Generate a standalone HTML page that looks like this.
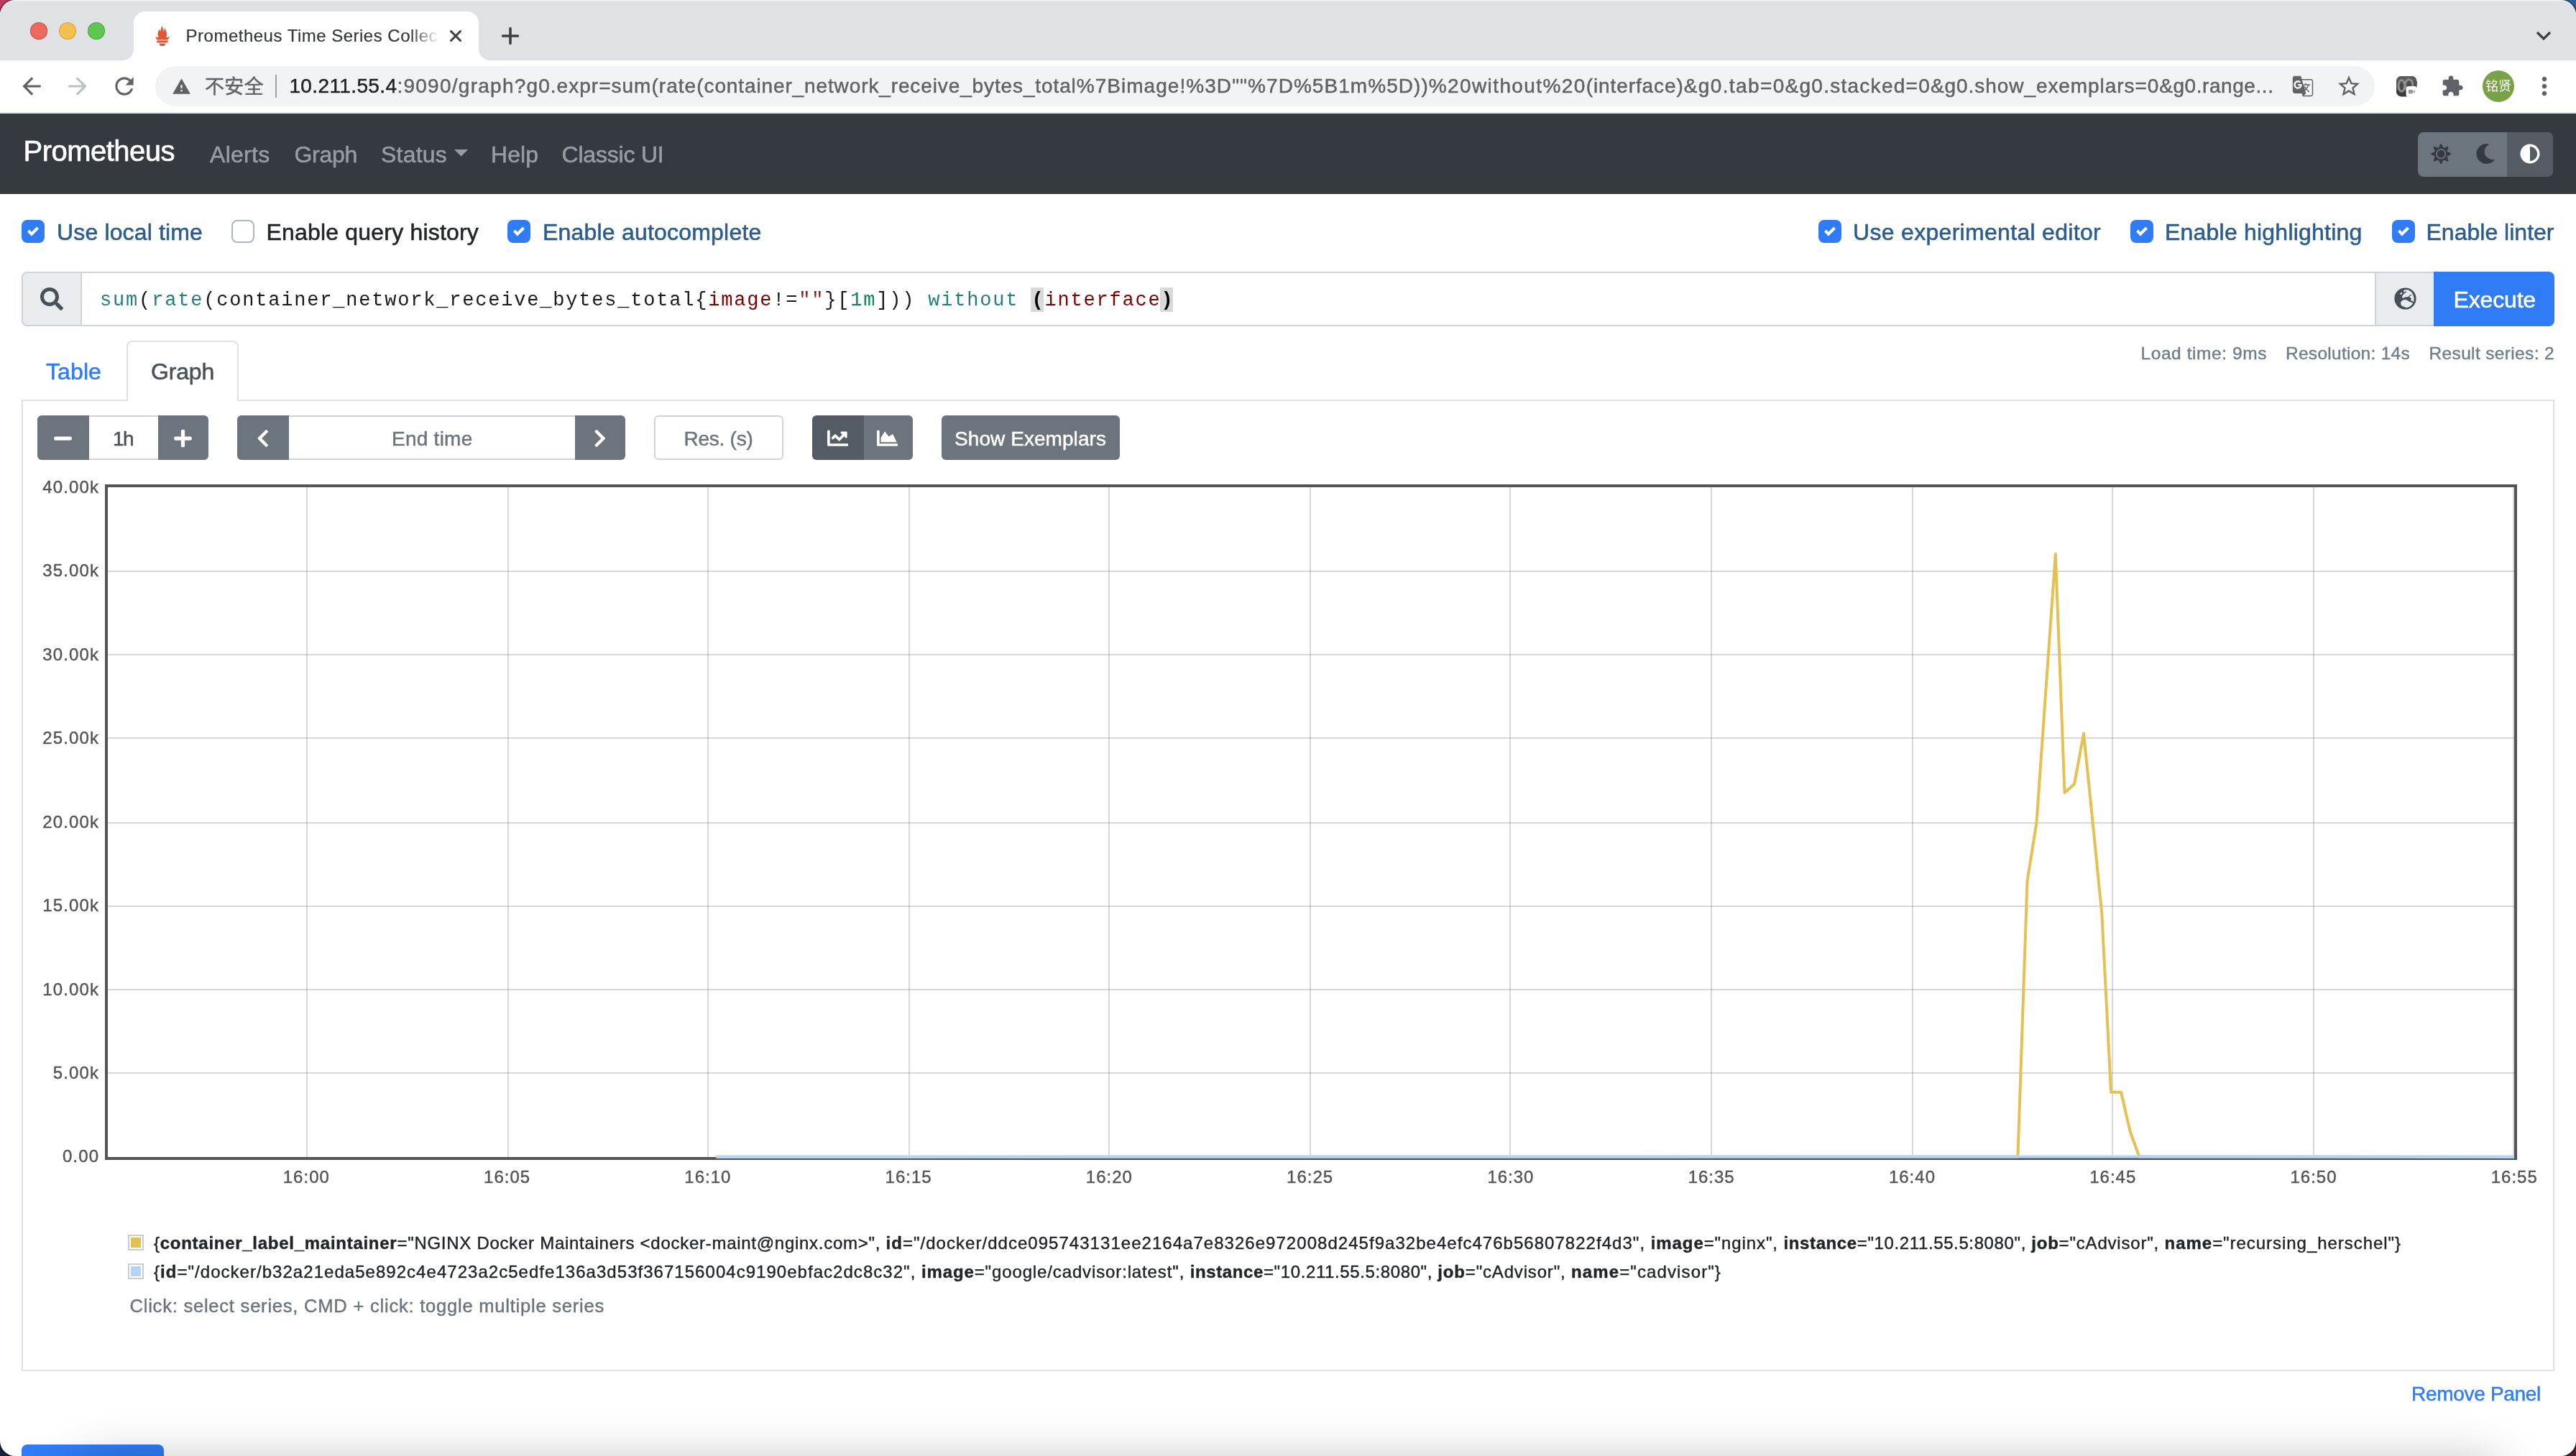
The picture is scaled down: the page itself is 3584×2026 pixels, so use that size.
<!DOCTYPE html>
<html lang="en"><head><meta charset="utf-8"><title>Prometheus Time Series Collection and Processing Server</title>
<style>
html,body{margin:0;padding:0;}
body{width:3584px;height:2026px;overflow:hidden;background:#fff;position:relative;font-family:'Liberation Sans', 'Noto Sans CJK SC', sans-serif;}
#root{position:absolute;left:0;top:0;width:3584px;height:2026px;overflow:hidden;will-change:transform;}
#root section{position:absolute;left:0;top:0;width:0;height:0;}
#root div,#root svg,#root span.t{position:absolute;}
span.t{white-space:pre;}
span.t b{font-weight:700;}
</style></head>
<body><div id="root">
<section class="window-frame">
<div style="left:0px;top:0px;width:40px;height:40px;background:#b93c62;"></div>
<div style="left:3544px;top:0px;width:40px;height:40px;background:#2a6199;"></div>
<div style="left:0px;top:1986px;width:40px;height:40px;background:#16223d;"></div>
<div style="left:3544px;top:1986px;width:40px;height:40px;background:#571a30;"></div>
<div style="left:0px;top:0px;width:3584px;height:2026px;background:#ffffff;border-radius:21px;box-shadow:0 0 0 1.500px rgba(0,0,0,0.450);"></div>
</section>
<section class="browser-tabstrip">
<div style="left:0px;top:0px;width:3584px;height:84px;background:#dfe1e5;border-radius:21px 21px 0 0;"></div>
<div style="left:20px;top:0px;width:3544px;height:1px;background:#f3f3f5;"></div>
<div style="left:14px;top:1px;width:3556px;height:1px;background:#e7e8eb;"></div>
<div style="left:42px;top:31px;width:24px;height:24px;background:#ed6a5e;border-radius:50%;box-shadow:inset 0 0 0 1px #d04e42;"></div>
<div style="left:82px;top:31px;width:24px;height:24px;background:#f5bf4f;border-radius:50%;box-shadow:inset 0 0 0 1px #d6a13d;"></div>
<div style="left:122px;top:31px;width:24px;height:24px;background:#61c554;border-radius:50%;box-shadow:inset 0 0 0 1px #4ea73f;"></div>
<svg style="left:170px;top:15px;" width="512" height="69" viewBox="0 0 512 69"><path fill="#ffffff" d="M0 69 C9 69 16 62 16 53 L16 17 C16 8 23 1 32 1 L480 1 C489 1 496 8 496 17 L496 53 C496 62 503 69 512 69 Z"/></svg>
<svg style="left:216px;top:35.6px;" width="20" height="28.4" viewBox="0 0 20 28.400"><path fill="#da5a38" d="M9.500 0C10.600 2.400 11 5 11.500 8.500C12 6.300 12.800 4.300 13.600 2.700C14 6 16.300 8 16.100 12C16 13.800 15.600 15 14.900 16.100Q17.500 16.300 20 15.100Q19 17.800 17.500 19.200L2.300 19.200Q1 17.800 0 15.100Q2.500 16.300 5 16.100C3.300 14 3 11 4 8.500C4.600 6.500 5 5 5.200 3.900C5.600 5.500 6.400 6.800 7.200 7.400C7.800 5 8 2.500 9.500 0Z"/><rect fill="#da5a38" x="2.300" y="20.400" width="15.200" height="2.900"/><path fill="#da5a38" d="M5.400 24.500H14.400C14 26.800 12.200 28.400 9.900 28.400S5.800 26.800 5.400 24.500Z"/></svg>
<span class="t" id="t1" style="letter-spacing:0.492px;top:37.98px;font-size:24px;line-height:24px;color:#33373b;font-family:'Liberation Sans', 'Noto Sans CJK SC', sans-serif;left:258.6px;-webkit-text-stroke:0.2px;">Prometheus Time Series Collec</span>
<div style="left:570px;top:24px;width:46px;height:50px;background:linear-gradient(90deg,rgba(255,255,255,0),#fff 92%);"></div>
<svg style="left:624px;top:40px;" width="20" height="20" viewBox="0 0 20 20"><path d="M3.500 3.500L16.500 16.500M16.500 3.500L3.500 16.500" stroke="#3c4043" stroke-width="3" stroke-linecap="round" fill="none"/></svg>
<svg style="left:696px;top:36px;" width="28" height="28" viewBox="0 0 28 28"><path d="M14 3.5V24.5M3.5 14H24.5" stroke="#3c4043" stroke-width="3.6" stroke-linecap="round" fill="none"/></svg>
<svg style="left:3527px;top:41px;" width="24" height="18" viewBox="0 0 24 18"><path d="M3 4L12 13L21 4" stroke="#3c4043" stroke-width="3.2" fill="none"/></svg>
</section>
<section class="browser-toolbar">
<div style="left:0px;top:84px;width:3584px;height:73px;background:#ffffff;"></div>
<div style="left:0px;top:156px;width:3584px;height:2px;background:#e3e4e6;"></div>
<svg style="left:24.5px;top:101.0px;" width="38" height="38" viewBox="0 0 24 24"><path fill="#5f6368" d="M20 11H7.83l5.59-5.590L12 4l-8 8 8 8 1.410-1.410L7.830 13H20v-2z"/></svg>
<svg style="left:88.5px;top:101.0px;" width="38" height="38" viewBox="0 0 24 24"><path fill="#bdc1c6" d="M12 4l-1.410 1.410L16.170 11H4v2h12.170l-5.580 5.590L12 20l8-8z"/></svg>
<svg style="left:153.5px;top:101.0px;" width="38" height="38" viewBox="0 0 24 24"><path fill="#5f6368" d="M17.650 6.350C16.200 4.900 14.210 4 12 4c-4.420 0-7.990 3.580-7.990 8s3.570 8 7.990 8c3.730 0 6.840-2.550 7.730-6h-2.080c-.820 2.330-3.040 4-5.650 4-3.310 0-6-2.690-6-6s2.690-6 6-6c1.660 0 3.140.690 4.220 1.780L13 11h7V4l-2.350 2.350z"/></svg>
<div style="left:216px;top:92px;width:3088px;height:56px;background:#f1f3f4;border-radius:28px;"></div>
<svg style="left:238.5px;top:107.0px;" width="27" height="27" viewBox="0 0 24 24"><path fill="#5f6368" d="M1 21h22L12 2 1 21zm12-3h-2v-2h2v2zm0-4h-2v-4h2v4z"/></svg>
<span class="t" id="t2" style="letter-spacing:0.333px;top:108.14px;font-size:27px;line-height:27px;color:#5f6368;font-family:'Liberation Sans', 'Noto Sans CJK SC', sans-serif;-webkit-text-stroke:0.46px;left:285px;">不安全</span>
<div style="left:382.5px;top:104px;width:2px;height:32px;background:#9aa0a6;"></div>
<span class="t" id="t3" style="letter-spacing:0.378px;top:105.80px;font-size:28px;line-height:28px;color:#202124;font-family:'Liberation Sans', 'Noto Sans CJK SC', sans-serif;-webkit-text-stroke:0.48px;left:402.4px;">10.211.55.4</span>
<span class="t" id="t4" style="letter-spacing:1.263px;top:105.80px;font-size:28px;line-height:28px;color:#5f6368;font-family:'Liberation Sans', 'Noto Sans CJK SC', sans-serif;-webkit-text-stroke:0.48px;left:552.4px;">:9090/graph?</span>
<span class="t" id="t5" style="letter-spacing:1.021px;top:105.80px;font-size:28px;line-height:28px;color:#5f6368;font-family:'Liberation Sans', 'Noto Sans CJK SC', sans-serif;-webkit-text-stroke:0.48px;left:732.6px;">g0.expr=sum(rate(</span>
<span class="t" id="t6" style="letter-spacing:0.880px;top:105.80px;font-size:28px;line-height:28px;color:#5f6368;font-family:'Liberation Sans', 'Noto Sans CJK SC', sans-serif;-webkit-text-stroke:0.48px;left:979.5px;">container_network_receive_bytes_total</span>
<span class="t" id="t7" style="letter-spacing:1.047px;top:105.80px;font-size:28px;line-height:28px;color:#5f6368;font-family:'Liberation Sans', 'Noto Sans CJK SC', sans-serif;-webkit-text-stroke:0.48px;left:1497.7px;">%7Bimage!%3D&quot;&quot;%7D%5B1m%5D))</span>
<span class="t" id="t8" style="letter-spacing:1.391px;top:105.80px;font-size:28px;line-height:28px;color:#5f6368;font-family:'Liberation Sans', 'Noto Sans CJK SC', sans-serif;-webkit-text-stroke:0.48px;left:1987.8px;">%20without%20</span>
<span class="t" id="t9" style="letter-spacing:0.905px;top:105.80px;font-size:28px;line-height:28px;color:#5f6368;font-family:'Liberation Sans', 'Noto Sans CJK SC', sans-serif;-webkit-text-stroke:0.48px;left:2206.7px;">(interface)</span>
<span class="t" id="t10" style="letter-spacing:1.383px;top:105.80px;font-size:28px;line-height:28px;color:#5f6368;font-family:'Liberation Sans', 'Noto Sans CJK SC', sans-serif;-webkit-text-stroke:0.48px;left:2342.7px;">&amp;g0.tab=0</span>
<span class="t" id="t11" style="letter-spacing:1.259px;top:105.80px;font-size:28px;line-height:28px;color:#5f6368;font-family:'Liberation Sans', 'Noto Sans CJK SC', sans-serif;-webkit-text-stroke:0.48px;left:2483.6px;">&amp;g0.stacked=0</span>
<span class="t" id="t12" style="letter-spacing:0.929px;top:105.80px;font-size:28px;line-height:28px;color:#5f6368;font-family:'Liberation Sans', 'Noto Sans CJK SC', sans-serif;-webkit-text-stroke:0.48px;left:2686px;">&amp;g0.show_exemplars=0</span>
<span class="t" id="t13" style="letter-spacing:0.561px;top:105.80px;font-size:28px;line-height:28px;color:#5f6368;font-family:'Liberation Sans', 'Noto Sans CJK SC', sans-serif;-webkit-text-stroke:0.48px;left:3004.2px;">&amp;g0.range...</span>
<svg style="left:3187.0px;top:103.0px;" width="34" height="34" viewBox="0 0 24 24"><path fill="#5f6368" d="M20 5h-9.120L10 2H4c-1.100 0-2 .900-2 2v13c0 1.100.900 2 2 2h7l1 3h8c1.100 0 2-.900 2-2V7c0-1.100-.900-2-2-2zM7.170 14.590c-2.250 0-4.090-1.830-4.090-4.090s1.830-4.090 4.090-4.090c1.040 0 1.990.370 2.740 1.070l.070.060-1.230 1.180-.060-.050c-.290-.270-.780-.590-1.520-.590-1.310 0-2.380 1.090-2.380 2.420s1.070 2.420 2.380 2.420c1.370 0 1.960-.870 2.120-1.460H7.080V9.910h3.950l.010.070c.040.210.050.400.050.610 0 2.350-1.610 4-3.920 4zm6.030-1.710c.330.600.740 1.180 1.190 1.700l-.540.530-.650-2.230zm.770-.760h-.990l-.310-1.040h3.990s-.340 1.310-1.560 2.740c-.520-.620-.890-1.230-1.130-1.700zM21 20c0 .550-.450 1-1 1h-7l2-2-.810-2.770.920-.920L17.790 18l.730-.730-2.710-2.680c.900-1.030 1.600-2.250 1.920-3.510H19v-1.040h-3.640V9h-1.040v1.040h-1.960L11.180 6H20c.550 0 1 .450 1 1v13z"/></svg>
<svg style="left:3250.0px;top:101.5px;" width="36" height="36" viewBox="0 0 24 24"><path fill="#5f6368" d="M22 9.240l-7.190-.620L12 2 9.190 8.630 2 9.240l5.460 4.730L5.820 21 12 17.270 18.180 21l-1.630-7.030L22 9.240zM12 15.400l-3.760 2.270 1-4.280-3.320-2.880 4.380-.380L12 6.100l1.710 4.040 4.380.380-3.320 2.880 1 4.280L12 15.400z"/></svg>
<svg style="left:3334px;top:106px;" width="30" height="30" viewBox="0 0 30 30"><rect x="0" y="0" width="28.4" height="28.4" rx="7" fill="#3a3a3c"/><rect x="0" y="0" width="28.4" height="17" rx="7" fill="#5a5a5c"/><rect x="0" y="8" width="28.4" height="12" fill="#4a4a4c"/><rect x="0" y="7" width="28.4" height="3" fill="#525254"/><rect x="0" y="18" width="28.4" height="3" fill="#424244"/><ellipse cx="7.300" cy="13.400" rx="4.300" ry="7.800" fill="none" stroke="#8e8e90" stroke-width="3"/><ellipse cx="17.600" cy="12" rx="5.200" ry="7.600" fill="none" stroke="#8e8e90" stroke-width="3"/><rect x="13.600" y="13.900" width="15.400" height="15.400" rx="3.600" fill="#ffffff"/><rect x="16.800" y="18.700" width="6.200" height="5.600" rx="1" fill="#9a9a9c"/><path d="M23 21.500l3-2.300v4.600z" fill="#9a9a9c"/></svg>
<svg style="left:3396.0px;top:103.7px;" width="32" height="32" viewBox="0 0 24 24"><path fill="#5f6368" d="M20.500 11H19V7c0-1.100-.900-2-2-2h-4V3.500C13 2.120 11.880 1 10.500 1S8 2.120 8 3.500V5H4c-1.100 0-1.990.900-1.990 2v3.800H3.500c1.490 0 2.700 1.210 2.700 2.700s-1.210 2.700-2.700 2.700H2V20c0 1.100.900 2 2 2h3.800v-1.500c0-1.490 1.210-2.700 2.700-2.700 1.490 0 2.700 1.210 2.700 2.700V22H17c1.100 0 2-.900 2-2v-4h1.500c1.380 0 2.500-1.120 2.500-2.500S21.880 11 20.500 11z"/></svg>
<div style="left:3453.5px;top:98px;width:44px;height:44px;background:#79a146;border-radius:50%;"></div>
<span class="t" id="t14" style="letter-spacing:0.000px;top:111.26px;font-size:18px;line-height:18px;color:#ffffff;font-family:'Liberation Sans', 'Noto Sans CJK SC', sans-serif;left:3458px;-webkit-text-stroke:0;">铭贤</span>
<svg style="left:3520.0px;top:100.0px;" width="40" height="40" viewBox="0 0 24 24"><path fill="#5f6368" d="M12 8c1.100 0 2-.900 2-2s-.900-2-2-2-2 .900-2 2 .900 2 2 2zm0 2c-1.100 0-2 .900-2 2s.900 2 2 2 2-.900 2-2-.900-2-2-2zm0 6c-1.100 0-2 .900-2 2s.900 2 2 2 2-.900 2-2-.900-2-2-2z"/></svg>
</section>
<section class="navbar">
<div style="left:0px;top:158px;width:3584px;height:112px;background:#343a40;"></div>
<span class="t" id="t15" style="letter-spacing:-0.517px;top:190.14px;font-size:40px;line-height:40px;color:#ffffff;font-family:'Liberation Sans', 'Noto Sans CJK SC', sans-serif;-webkit-text-stroke:0.68px;left:32.5px;">Prometheus</span>
<span class="t" id="t16" style="letter-spacing:0.284px;top:198.91px;font-size:32px;line-height:32px;color:#9a9da0;font-family:'Liberation Sans', 'Noto Sans CJK SC', sans-serif;-webkit-text-stroke:0.54px;left:292px;">Alerts</span>
<span class="t" id="t17" style="letter-spacing:-0.287px;top:198.91px;font-size:32px;line-height:32px;color:#9a9da0;font-family:'Liberation Sans', 'Noto Sans CJK SC', sans-serif;-webkit-text-stroke:0.54px;left:409.5px;">Graph</span>
<span class="t" id="t18" style="letter-spacing:0.214px;top:198.91px;font-size:32px;line-height:32px;color:#9a9da0;font-family:'Liberation Sans', 'Noto Sans CJK SC', sans-serif;-webkit-text-stroke:0.54px;left:530px;">Status</span>
<svg style="left:631.5px;top:208px;" width="20" height="10" viewBox="0 0 20 10"><path d="M0 0H19.200L9.600 9.600z" fill="#9a9da0"/></svg>
<span class="t" id="t19" style="letter-spacing:0.047px;top:198.91px;font-size:32px;line-height:32px;color:#9a9da0;font-family:'Liberation Sans', 'Noto Sans CJK SC', sans-serif;-webkit-text-stroke:0.54px;left:683px;">Help</span>
<span class="t" id="t20" style="letter-spacing:-0.202px;top:198.91px;font-size:32px;line-height:32px;color:#9a9da0;font-family:'Liberation Sans', 'Noto Sans CJK SC', sans-serif;-webkit-text-stroke:0.54px;left:781.5px;">Classic UI</span>
<div style="left:3364px;top:184px;width:188px;height:62px;background:#6c757d;border-radius:8px;"></div>
<div style="left:3488px;top:184px;width:64px;height:62px;background:#545b62;border-radius:0 8px 8px 0;"></div>
<svg style="left:3381.65px;top:199.85px;" width="28.3" height="28.3" viewBox="0 0 512 512"><path fill="#343a40" d="M256 160c-52.900 0-96 43.100-96 96s43.100 96 96 96 96-43.100 96-96-43.100-96-96-96zm246.400 80.500l-94.700-47.300 33.500-100.400c4.500-13.600-8.400-26.500-21.900-21.900l-100.400 33.500-47.400-94.800c-6.400-12.800-24.600-12.800-31 0l-47.300 94.700L92.700 70.800c-13.600-4.500-26.500 8.400-21.900 21.900l33.500 100.400-94.700 47.400c-12.800 6.400-12.800 24.600 0 31l94.700 47.300-33.500 100.500c-4.500 13.600 8.400 26.500 21.900 21.900l100.400-33.500 47.300 94.700c6.400 12.800 24.600 12.800 31 0l47.300-94.700 100.400 33.500c13.600 4.500 26.500-8.400 21.900-21.900l-33.500-100.400 94.700-47.300c13-6.500 13-24.700.200-31.100zm-155.900 106c-49.900 49.900-131.100 49.900-181 0-49.900-49.900-49.900-131.100 0-181 49.900-49.900 131.100-49.900 181 0 49.900 49.900 49.900 131.100 0 181z"/></svg>
<svg style="left:3444.0px;top:199.5px;" width="28" height="28" viewBox="0 0 512 512"><path fill="#343a40" d="M283.211 512c78.962 0 151.079-35.925 198.857-94.792 7.068-8.708-.639-21.430-11.562-19.350-124.203 23.654-238.262-71.576-238.262-196.954 0-72.222 38.662-138.635 101.498-174.394 9.686-5.512 7.250-20.197-3.756-22.230A258.156 258.156 0 0 0 283.211 0c-141.309 0-256 114.511-256 256 0 141.309 114.511 256 256 256z"/></svg>
<svg style="left:3505.5px;top:199.5px;" width="28" height="28" viewBox="0 0 512 512"><path fill="#ffffff" d="M8 256c0 136.966 111.033 248 248 248s248-111.034 248-248S392.966 8 256 8 8 119.033 8 256zm248 184V72c101.705 0 184 82.311 184 184 0 101.705-82.311 184-184 184z"/></svg>
</section>
<section class="options-row">
<div style="left:30px;top:306px;width:32px;height:32px;background:#2f7cf6;border-radius:8px;"></div>
<svg style="left:38px;top:314px;" width="16" height="16" viewBox="0 0 8 8"><path fill="#fff" d="M6.564.750l-3.590 3.612-1.538-1.550L0 4.260l2.974 2.990L8 2.193z"/></svg>
<span class="t" id="t21" style="letter-spacing:0.146px;top:306.91px;font-size:32px;line-height:32px;color:#2b5c8e;font-family:'Liberation Sans', 'Noto Sans CJK SC', sans-serif;-webkit-text-stroke:0.54px;left:79px;">Use local time</span>
<div style="left:322px;top:306px;width:32px;height:32px;background:#ffffff;border-radius:8px;box-sizing:border-box;border:2px solid #adb5bd;"></div>
<span class="t" id="t22" style="letter-spacing:0.189px;top:306.91px;font-size:32px;line-height:32px;color:#212529;font-family:'Liberation Sans', 'Noto Sans CJK SC', sans-serif;-webkit-text-stroke:0.54px;left:370.5px;">Enable query history</span>
<div style="left:706px;top:306px;width:32px;height:32px;background:#2f7cf6;border-radius:8px;"></div>
<svg style="left:714px;top:314px;" width="16" height="16" viewBox="0 0 8 8"><path fill="#fff" d="M6.564.750l-3.590 3.612-1.538-1.550L0 4.260l2.974 2.990L8 2.193z"/></svg>
<span class="t" id="t23" style="letter-spacing:0.202px;top:306.91px;font-size:32px;line-height:32px;color:#2b5c8e;font-family:'Liberation Sans', 'Noto Sans CJK SC', sans-serif;-webkit-text-stroke:0.54px;left:755px;">Enable autocomplete</span>
<div style="left:2530px;top:306px;width:32px;height:32px;background:#2f7cf6;border-radius:8px;"></div>
<svg style="left:2538px;top:314px;" width="16" height="16" viewBox="0 0 8 8"><path fill="#fff" d="M6.564.750l-3.590 3.612-1.538-1.550L0 4.260l2.974 2.990L8 2.193z"/></svg>
<span class="t" id="t24" style="letter-spacing:0.307px;top:306.91px;font-size:32px;line-height:32px;color:#2b5c8e;font-family:'Liberation Sans', 'Noto Sans CJK SC', sans-serif;-webkit-text-stroke:0.54px;left:2578px;">Use experimental editor</span>
<div style="left:2964px;top:306px;width:32px;height:32px;background:#2f7cf6;border-radius:8px;"></div>
<svg style="left:2972px;top:314px;" width="16" height="16" viewBox="0 0 8 8"><path fill="#fff" d="M6.564.750l-3.590 3.612-1.538-1.550L0 4.260l2.974 2.990L8 2.193z"/></svg>
<span class="t" id="t25" style="letter-spacing:0.214px;top:306.91px;font-size:32px;line-height:32px;color:#2b5c8e;font-family:'Liberation Sans', 'Noto Sans CJK SC', sans-serif;-webkit-text-stroke:0.54px;left:3012px;">Enable highlighting</span>
<div style="left:3328px;top:306px;width:32px;height:32px;background:#2f7cf6;border-radius:8px;"></div>
<svg style="left:3336px;top:314px;" width="16" height="16" viewBox="0 0 8 8"><path fill="#fff" d="M6.564.750l-3.590 3.612-1.538-1.550L0 4.260l2.974 2.990L8 2.193z"/></svg>
<span class="t" id="t26" style="letter-spacing:0.008px;top:306.91px;font-size:32px;line-height:32px;color:#2b5c8e;font-family:'Liberation Sans', 'Noto Sans CJK SC', sans-serif;-webkit-text-stroke:0.54px;left:3375.5px;">Enable linter</span>
</section>
<section class="expression-input">
<div style="left:30px;top:378px;width:3358px;height:76px;background:#ffffff;box-sizing:border-box;border:2px solid #ced4da;border-radius:8px 0 0 8px;"></div>
<div style="left:30px;top:378px;width:84px;height:76px;background:#e9ecef;box-sizing:border-box;border:2px solid #ced4da;border-radius:8px 0 0 8px;"></div>
<svg style="left:55.5px;top:400.0px;" width="32" height="32" viewBox="0 0 512 512"><path fill="#495057" d="M505 442.700L405.300 343c-4.500-4.500-10.600-7-17-7H372c27.600-35.300 44-79.700 44-128C416 93.100 322.900 0 208 0S0 93.100 0 208s93.100 208 208 208c48.300 0 92.700-16.400 128-44v16.300c0 6.400 2.500 12.500 7 17l99.700 99.700c9.400 9.400 24.600 9.400 33.900 0l28.300-28.300c9.400-9.400 9.400-24.600.100-34zM208 336c-70.700 0-128-57.200-128-128 0-70.700 57.200-128 128-128 70.700 0 128 57.200 128 128 0 70.700-57.200 128-128 128z"/></svg>
<div style="left:1434px;top:400px;width:18px;height:34px;background:#d9d9d9;"></div>
<div style="left:1614px;top:400px;width:18px;height:34px;background:#d9d9d9;"></div>
<span class="t" id="t27" style="top:405.00px;font-size:27px;line-height:27px;color:#1a1a1a;font-family:'Liberation Mono', monospace;left:139.1px;letter-spacing:1.8px;"><span style="color:#277d7d">sum</span>(<span style="color:#277d7d">rate</span>(container_network_receive_bytes_total{<span style="color:#800000">image</span>!=<span style="color:#a31515">&quot;&quot;</span>}[<span style="color:#098658">1m</span>])) <span style="color:#277d7d">without</span> <b style="color:#000">(</b><span style="color:#800000">interface</span><b style="color:#000">)</b></span>
<div style="left:3304px;top:378px;width:84px;height:76px;background:#e9ecef;box-sizing:border-box;border:2px solid #ced4da;border-right:none;"></div>
<svg style="left:3329.6px;top:399.2px;" width="33" height="33" viewBox="-16.500 -16.500 33 33"><circle cx="0" cy="0" r="15.100" fill="#4a4f57"/><path fill="#e9ecef" d="M-1.06 -12.30L3.89 -12.13L8.18 -9.50L10.81 -5.87L12.13 -0.59L11.64 4.68L8.84 3.03L7.52 1.71L8.51 0.07L7.52 -0.92L5.87 -2.24L6.20 -3.89L9.17 -4.22L9.17 -5.37L6.20 -5.37L4.88 -3.23L2.90 -2.24L0.92 -1.91L0.26 -2.57L-0.73 -2.24L-1.06 -0.92L-4.02 -0.92L-4.52 -2.57L-3.03 -5.21L-1.06 -7.19L0.92 -8.51L1.91 -9.83L0.92 -10.48L-0.40 -9.17L-2.37 -8.84L-2.37 -10.48ZM-7.32 -6.20L-6.99 -7.52L-5.34 -8.67L-4.19 -8.18L-4.68 -6.53L-5.67 -5.70L-6.99 -5.70ZM-6.33 6.00L-5.67 3.69L-3.03 2.04L-0.07 1.55L2.24 2.04L4.55 3.69L7.19 4.68L9.50 5.67L10.81 6.50L8.84 8.64L6.20 10.95L3.56 12.27L0.26 12.76L0.10 11.77L-2.37 11.28L-4.68 9.96L-6.17 7.98Z"/></svg>
<div style="left:3386px;top:378px;width:168px;height:76px;background:#2f7cf6;border-radius:0 8px 8px 0;"></div>
<span class="t" id="t28" style="letter-spacing:-0.161px;top:401.41px;font-size:32px;line-height:32px;color:#ffffff;font-family:'Liberation Sans', 'Noto Sans CJK SC', sans-serif;-webkit-text-stroke:0.54px;left:3413.5px;">Execute</span>
</section>
<section class="query-stats">
<span class="t" id="t29" style="letter-spacing:0.571px;top:479.76px;font-size:24.5px;line-height:24.5px;color:#6f7e8c;font-family:'Liberation Sans', 'Noto Sans CJK SC', sans-serif;-webkit-text-stroke:0.42px;left:2978.5px;">Load time: 9ms</span>
<span class="t" id="t30" style="letter-spacing:0.274px;top:479.76px;font-size:24.5px;line-height:24.5px;color:#6f7e8c;font-family:'Liberation Sans', 'Noto Sans CJK SC', sans-serif;-webkit-text-stroke:0.42px;left:3180px;">Resolution: 14s</span>
<span class="t" id="t31" style="letter-spacing:0.353px;top:479.76px;font-size:24.5px;line-height:24.5px;color:#6f7e8c;font-family:'Liberation Sans', 'Noto Sans CJK SC', sans-serif;-webkit-text-stroke:0.42px;left:3379.5px;">Result series: 2</span>
</section>
<section class="panel-tabs">
<div style="left:30px;top:556px;width:3524px;height:1352px;background:#ffffff;box-sizing:border-box;border:2px solid #dee2e6;"></div>
<div style="left:176px;top:474px;width:156px;height:84px;background:#ffffff;box-sizing:border-box;border:2px solid #dee2e6;border-bottom:none;border-radius:8px 8px 0 0;"></div>
<span class="t" id="t32" style="letter-spacing:0.100px;top:500.91px;font-size:32px;line-height:32px;color:#2f7cf6;font-family:'Liberation Sans', 'Noto Sans CJK SC', sans-serif;-webkit-text-stroke:0.54px;left:64px;">Table</span>
<span class="t" id="t33" style="letter-spacing:-0.188px;top:500.91px;font-size:32px;line-height:32px;color:#495057;font-family:'Liberation Sans', 'Noto Sans CJK SC', sans-serif;-webkit-text-stroke:0.54px;left:210px;">Graph</span>
</section>
<section class="graph-controls">
<div style="left:122px;top:578px;width:100px;height:62px;background:#fff;box-sizing:border-box;border:2px solid #ced4da;"></div>
<div style="left:52px;top:578px;width:72px;height:62px;background:#6c757d;border-radius:6px 0 0 6px;"></div>
<div style="left:220px;top:578px;width:70px;height:62px;background:#6c757d;border-radius:0 6px 6px 0;"></div>
<svg style="left:75.0px;top:596.0px;" width="25" height="28" viewBox="0 0 448 512"><path fill="#ffffff" d="M416 208H32c-17.670 0-32 14.330-32 32v32c0 17.670 14.330 32 32 32h384c17.670 0 32-14.330 32-32v-32c0-17.670-14.330-32-32-32z"/></svg>
<span class="t" id="t34" style="letter-spacing:-1.578px;top:597.30px;font-size:28px;line-height:28px;color:#495057;font-family:'Liberation Sans', 'Noto Sans CJK SC', sans-serif;-webkit-text-stroke:0.48px;left:157px;">1h</span>
<svg style="left:242.0px;top:596.0px;" width="25" height="28" viewBox="0 0 448 512"><path fill="#ffffff" d="M416 208H272V64c0-17.670-14.330-32-32-32h-32c-17.670 0-32 14.330-32 32v144H32c-17.670 0-32 14.330-32 32v32c0 17.670 14.330 32 32 32h144v144c0 17.670 14.330 32 32 32h32c17.670 0 32-14.330 32-32V304h144c17.670 0 32-14.330 32-32v-32c0-17.670-14.330-32-32-32z"/></svg>
<div style="left:400px;top:578px;width:402px;height:62px;background:#fff;box-sizing:border-box;border:2px solid #ced4da;"></div>
<div style="left:330px;top:578px;width:72px;height:62px;background:#6c757d;border-radius:6px 0 0 6px;"></div>
<div style="left:800px;top:578px;width:70px;height:62px;background:#6c757d;border-radius:0 6px 6px 0;"></div>
<svg style="left:357.25px;top:596.0px;" width="17.5" height="28" viewBox="0 0 320 512"><path fill="#ffffff" d="M34.520 239.030L228.870 44.690c9.370-9.370 24.570-9.370 33.940 0l22.670 22.670c9.360 9.360 9.370 24.520.040 33.900L131.490 256l154.020 154.750c9.340 9.380 9.320 24.540-.040 33.900l-22.670 22.670c-9.370 9.370-24.570 9.370-33.940 0L34.520 272.970c-9.370-9.370-9.370-24.570 0-33.940z"/></svg>
<span class="t" id="t35" style="letter-spacing:0.250px;top:597.30px;font-size:28px;line-height:28px;color:#6c757d;font-family:'Liberation Sans', 'Noto Sans CJK SC', sans-serif;-webkit-text-stroke:0.48px;left:545px;">End time</span>
<svg style="left:826.25px;top:596.0px;" width="17.5" height="28" viewBox="0 0 320 512"><path fill="#ffffff" d="M285.476 272.971L91.132 467.314c-9.373 9.373-24.569 9.373-33.941 0l-22.667-22.667c-9.357-9.357-9.375-24.522-.040-33.901L188.505 256 34.484 101.255c-9.335-9.379-9.317-24.544.040-33.901l22.667-22.667c9.373-9.373 24.569-9.373 33.941 0L285.475 239.030c9.373 9.372 9.373 24.568.001 33.941z"/></svg>
<div style="left:910px;top:578px;width:180px;height:62px;background:#fff;box-sizing:border-box;border:2px solid #ced4da;border-radius:6px;"></div>
<span class="t" id="t36" style="letter-spacing:-0.250px;top:597.30px;font-size:28px;line-height:28px;color:#6c757d;font-family:'Liberation Sans', 'Noto Sans CJK SC', sans-serif;-webkit-text-stroke:0.48px;left:951.5px;">Res. (s)</span>
<div style="left:1130px;top:578px;width:72px;height:62px;background:#545b62;border-radius:6px 0 0 6px;"></div>
<div style="left:1202px;top:578px;width:68px;height:62px;background:#6c757d;border-radius:0 6px 6px 0;"></div>
<svg style="left:1150.75px;top:595.25px;" width="29.5" height="29.5" viewBox="0 0 512 512"><path fill="#ffffff" d="M496 384H64V80c0-8.840-7.160-16-16-16H16C7.160 64 0 71.160 0 80v336c0 17.670 14.330 32 32 32h464c8.840 0 16-7.160 16-16v-32c0-8.840-7.160-16-16-16zM464 96H345.940c-21.380 0-32.090 25.850-16.970 40.970l32.400 32.400L288 242.750l-73.370-73.370c-12.500-12.500-32.760-12.500-45.250 0l-68.690 68.690c-6.250 6.250-6.250 16.380 0 22.630l22.620 22.620c6.250 6.250 16.380 6.250 22.630 0L192 237.250l73.370 73.370c12.500 12.500 32.760 12.500 45.250 0l96-96 32.400 32.400c15.120 15.120 40.970 4.410 40.970-16.970V112c.010-8.840-7.150-16-15.990-16z"/></svg>
<svg style="left:1219.75px;top:595.25px;" width="29.5" height="29.5" viewBox="0 0 512 512"><path fill="#ffffff" d="M500 384c6.600 0 12 5.400 12 12v40c0 6.600-5.400 12-12 12H12c-6.600 0-12-5.400-12-12V76c0-6.600 5.400-12 12-12h40c6.600 0 12 5.400 12 12v308h436zM372.700 159.500L288 216l-85.300-113.700c-5.100-6.800-15.500-6.300-19.900 1L96 248v104h384l-89.900-187.800c-3.200-6.500-11.400-8.700-17.400-4.700z"/></svg>
<div style="left:1310px;top:578px;width:248px;height:62px;background:#6c757d;border-radius:6px;"></div>
<span class="t" id="t37" style="letter-spacing:0.065px;top:597.30px;font-size:28px;line-height:28px;color:#ffffff;font-family:'Liberation Sans', 'Noto Sans CJK SC', sans-serif;-webkit-text-stroke:0.48px;left:1328px;">Show Exemplars</span>
</section>
<section class="graph-chart">
<svg style="left:0px;top:0px;" width="3584" height="2026" viewBox="0 0 3584 2026"><rect x="426" y="678" width="2" height="932" fill="rgba(0,0,0,0.150)"/><rect x="706" y="678" width="2" height="932" fill="rgba(0,0,0,0.150)"/><rect x="984" y="678" width="2" height="932" fill="rgba(0,0,0,0.150)"/><rect x="1264" y="678" width="2" height="932" fill="rgba(0,0,0,0.150)"/><rect x="1542" y="678" width="2" height="932" fill="rgba(0,0,0,0.150)"/><rect x="1822" y="678" width="2" height="932" fill="rgba(0,0,0,0.150)"/><rect x="2100" y="678" width="2" height="932" fill="rgba(0,0,0,0.150)"/><rect x="2380" y="678" width="2" height="932" fill="rgba(0,0,0,0.150)"/><rect x="2660" y="678" width="2" height="932" fill="rgba(0,0,0,0.150)"/><rect x="2938" y="678" width="2" height="932" fill="rgba(0,0,0,0.150)"/><rect x="3218" y="678" width="2" height="932" fill="rgba(0,0,0,0.150)"/><rect x="3496" y="678" width="2" height="932" fill="rgba(0,0,0,0.150)"/><rect x="150" y="1492" width="3348" height="2" fill="rgba(0,0,0,0.150)"/><rect x="150" y="1376" width="3348" height="2" fill="rgba(0,0,0,0.150)"/><rect x="150" y="1260" width="3348" height="2" fill="rgba(0,0,0,0.150)"/><rect x="150" y="1144" width="3348" height="2" fill="rgba(0,0,0,0.150)"/><rect x="150" y="1026" width="3348" height="2" fill="rgba(0,0,0,0.150)"/><rect x="150" y="910" width="3348" height="2" fill="rgba(0,0,0,0.150)"/><rect x="150" y="794" width="3348" height="2" fill="rgba(0,0,0,0.150)"/><rect x="148" y="676" width="3352" height="936" fill="none" stroke="#545454" stroke-width="4"/><polyline fill="none" stroke="#e5c052" stroke-width="4" stroke-linejoin="round" points="996.5,1610 2807.4,1609.5 2820.5,1226 2833.5,1144 2846.6,957.5 2859.8,771 2872.5,1103 2886,1091 2899,1020.5 2911.8,1146 2924.3,1271.6 2937,1519.7 2951,1519.7 2963.8,1575 2976.4,1609.5 3498,1610"/><polyline fill="none" stroke="#b4d5f5" stroke-width="4" points="996.500,1609.400 3498,1609.400"/></svg>
<span class="t" id="t38" style="top:1597.48px;font-size:24px;line-height:24px;color:#545454;font-family:'Liberation Sans', 'Noto Sans CJK SC', sans-serif;-webkit-text-stroke:0.41px;left:138.2px;transform:translateX(-100%);letter-spacing:1.150px;">0.00</span>
<span class="t" id="t39" style="top:1481.01px;font-size:24px;line-height:24px;color:#545454;font-family:'Liberation Sans', 'Noto Sans CJK SC', sans-serif;-webkit-text-stroke:0.41px;left:138.2px;transform:translateX(-100%);letter-spacing:1.150px;">5.00k</span>
<span class="t" id="t40" style="top:1364.54px;font-size:24px;line-height:24px;color:#545454;font-family:'Liberation Sans', 'Noto Sans CJK SC', sans-serif;-webkit-text-stroke:0.41px;left:138.2px;transform:translateX(-100%);letter-spacing:1.150px;">10.00k</span>
<span class="t" id="t41" style="top:1248.07px;font-size:24px;line-height:24px;color:#545454;font-family:'Liberation Sans', 'Noto Sans CJK SC', sans-serif;-webkit-text-stroke:0.41px;left:138.2px;transform:translateX(-100%);letter-spacing:1.150px;">15.00k</span>
<span class="t" id="t42" style="top:1131.60px;font-size:24px;line-height:24px;color:#545454;font-family:'Liberation Sans', 'Noto Sans CJK SC', sans-serif;-webkit-text-stroke:0.41px;left:138.2px;transform:translateX(-100%);letter-spacing:1.150px;">20.00k</span>
<span class="t" id="t43" style="top:1015.13px;font-size:24px;line-height:24px;color:#545454;font-family:'Liberation Sans', 'Noto Sans CJK SC', sans-serif;-webkit-text-stroke:0.41px;left:138.2px;transform:translateX(-100%);letter-spacing:1.150px;">25.00k</span>
<span class="t" id="t44" style="top:898.66px;font-size:24px;line-height:24px;color:#545454;font-family:'Liberation Sans', 'Noto Sans CJK SC', sans-serif;-webkit-text-stroke:0.41px;left:138.2px;transform:translateX(-100%);letter-spacing:1.150px;">30.00k</span>
<span class="t" id="t45" style="top:782.19px;font-size:24px;line-height:24px;color:#545454;font-family:'Liberation Sans', 'Noto Sans CJK SC', sans-serif;-webkit-text-stroke:0.41px;left:138.2px;transform:translateX(-100%);letter-spacing:1.150px;">35.00k</span>
<span class="t" id="t46" style="top:665.72px;font-size:24px;line-height:24px;color:#545454;font-family:'Liberation Sans', 'Noto Sans CJK SC', sans-serif;-webkit-text-stroke:0.41px;left:138.2px;transform:translateX(-100%);letter-spacing:1.150px;">40.00k</span>
<span class="t" id="t47" style="top:1625.68px;font-size:24px;line-height:24px;color:#545454;font-family:'Liberation Sans', 'Noto Sans CJK SC', sans-serif;-webkit-text-stroke:0.41px;left:426.3px;transform:translateX(-50%);letter-spacing:1px;">16:00</span>
<span class="t" id="t48" style="top:1625.68px;font-size:24px;line-height:24px;color:#545454;font-family:'Liberation Sans', 'Noto Sans CJK SC', sans-serif;-webkit-text-stroke:0.41px;left:705.5699999999999px;transform:translateX(-50%);letter-spacing:1px;">16:05</span>
<span class="t" id="t49" style="top:1625.68px;font-size:24px;line-height:24px;color:#545454;font-family:'Liberation Sans', 'Noto Sans CJK SC', sans-serif;-webkit-text-stroke:0.41px;left:984.8399999999999px;transform:translateX(-50%);letter-spacing:1px;">16:10</span>
<span class="t" id="t50" style="top:1625.68px;font-size:24px;line-height:24px;color:#545454;font-family:'Liberation Sans', 'Noto Sans CJK SC', sans-serif;-webkit-text-stroke:0.41px;left:1264.11px;transform:translateX(-50%);letter-spacing:1px;">16:15</span>
<span class="t" id="t51" style="top:1625.68px;font-size:24px;line-height:24px;color:#545454;font-family:'Liberation Sans', 'Noto Sans CJK SC', sans-serif;-webkit-text-stroke:0.41px;left:1543.3799999999999px;transform:translateX(-50%);letter-spacing:1px;">16:20</span>
<span class="t" id="t52" style="top:1625.68px;font-size:24px;line-height:24px;color:#545454;font-family:'Liberation Sans', 'Noto Sans CJK SC', sans-serif;-webkit-text-stroke:0.41px;left:1822.6499999999999px;transform:translateX(-50%);letter-spacing:1px;">16:25</span>
<span class="t" id="t53" style="top:1625.68px;font-size:24px;line-height:24px;color:#545454;font-family:'Liberation Sans', 'Noto Sans CJK SC', sans-serif;-webkit-text-stroke:0.41px;left:2101.92px;transform:translateX(-50%);letter-spacing:1px;">16:30</span>
<span class="t" id="t54" style="top:1625.68px;font-size:24px;line-height:24px;color:#545454;font-family:'Liberation Sans', 'Noto Sans CJK SC', sans-serif;-webkit-text-stroke:0.41px;left:2381.19px;transform:translateX(-50%);letter-spacing:1px;">16:35</span>
<span class="t" id="t55" style="top:1625.68px;font-size:24px;line-height:24px;color:#545454;font-family:'Liberation Sans', 'Noto Sans CJK SC', sans-serif;-webkit-text-stroke:0.41px;left:2660.46px;transform:translateX(-50%);letter-spacing:1px;">16:40</span>
<span class="t" id="t56" style="top:1625.68px;font-size:24px;line-height:24px;color:#545454;font-family:'Liberation Sans', 'Noto Sans CJK SC', sans-serif;-webkit-text-stroke:0.41px;left:2939.73px;transform:translateX(-50%);letter-spacing:1px;">16:45</span>
<span class="t" id="t57" style="top:1625.68px;font-size:24px;line-height:24px;color:#545454;font-family:'Liberation Sans', 'Noto Sans CJK SC', sans-serif;-webkit-text-stroke:0.41px;left:3219.0px;transform:translateX(-50%);letter-spacing:1px;">16:50</span>
<span class="t" id="t58" style="top:1625.68px;font-size:24px;line-height:24px;color:#545454;font-family:'Liberation Sans', 'Noto Sans CJK SC', sans-serif;-webkit-text-stroke:0.41px;left:3498.27px;transform:translateX(-50%);letter-spacing:1px;">16:55</span>
</section>
<section class="graph-legend">
<div style="left:178px;top:1718px;width:22px;height:22px;background:#ffffff;box-sizing:border-box;border:2px solid #cccccc;"></div>
<div style="left:182px;top:1722px;width:14px;height:14px;background:#e5c052;"></div>
<div style="left:178px;top:1758px;width:22px;height:22px;background:#ffffff;box-sizing:border-box;border:2px solid #cccccc;"></div>
<div style="left:182px;top:1762px;width:14px;height:14px;background:#b4d5f5;"></div>
<span class="t" id="t59" style="letter-spacing:0.725px;top:1717.68px;font-size:24px;line-height:24px;color:#212529;font-family:'Liberation Sans', 'Noto Sans CJK SC', sans-serif;-webkit-text-stroke:0.41px;left:214px;">{<b>container_label_maintainer</b>=&quot;NGINX Docker Maintainers &lt;docker-maint@nginx.com&gt;&quot;, </span>
<span class="t" id="t60" style="letter-spacing:1.034px;top:1717.68px;font-size:24px;line-height:24px;color:#212529;font-family:'Liberation Sans', 'Noto Sans CJK SC', sans-serif;-webkit-text-stroke:0.41px;left:1232.5px;"><b>id</b>=&quot;/docker/ddce095743131ee2164a7e8326e972008d245f9a32be4efc476b56807822f4d3&quot;, </span>
<span class="t" id="t61" style="letter-spacing:0.904px;top:1717.68px;font-size:24px;line-height:24px;color:#212529;font-family:'Liberation Sans', 'Noto Sans CJK SC', sans-serif;-webkit-text-stroke:0.41px;left:2296.8px;"><b>image</b>=&quot;nginx&quot;, </span>
<span class="t" id="t62" style="letter-spacing:0.616px;top:1717.68px;font-size:24px;line-height:24px;color:#212529;font-family:'Liberation Sans', 'Noto Sans CJK SC', sans-serif;-webkit-text-stroke:0.41px;left:2481.5px;"><b>instance</b>=&quot;10.211.55.5:8080&quot;, </span>
<span class="t" id="t63" style="letter-spacing:0.811px;top:1717.68px;font-size:24px;line-height:24px;color:#212529;font-family:'Liberation Sans', 'Noto Sans CJK SC', sans-serif;-webkit-text-stroke:0.41px;left:2826.2px;"><b>job</b>=&quot;cAdvisor&quot;, </span>
<span class="t" id="t64" style="letter-spacing:0.956px;top:1717.68px;font-size:24px;line-height:24px;color:#212529;font-family:'Liberation Sans', 'Noto Sans CJK SC', sans-serif;-webkit-text-stroke:0.41px;left:3011.6px;"><b>name</b>=&quot;recursing_herschel&quot;}</span>
<span class="t" id="t65" style="letter-spacing:1.035px;top:1757.68px;font-size:24px;line-height:24px;color:#212529;font-family:'Liberation Sans', 'Noto Sans CJK SC', sans-serif;-webkit-text-stroke:0.41px;left:214px;">{<b>id</b>=&quot;/docker/b32a21eda5e892c4e4723a2c5edfe136a3d53f367156004c9190ebfac2dc8c32&quot;, </span>
<span class="t" id="t66" style="letter-spacing:0.869px;top:1757.68px;font-size:24px;line-height:24px;color:#212529;font-family:'Liberation Sans', 'Noto Sans CJK SC', sans-serif;-webkit-text-stroke:0.41px;left:1282px;"><b>image</b>=&quot;google/cadvisor:latest&quot;, </span>
<span class="t" id="t67" style="letter-spacing:0.613px;top:1757.68px;font-size:24px;line-height:24px;color:#212529;font-family:'Liberation Sans', 'Noto Sans CJK SC', sans-serif;-webkit-text-stroke:0.41px;left:1655.7px;"><b>instance</b>=&quot;10.211.55.5:8080&quot;, </span>
<span class="t" id="t68" style="letter-spacing:0.830px;top:1757.68px;font-size:24px;line-height:24px;color:#212529;font-family:'Liberation Sans', 'Noto Sans CJK SC', sans-serif;-webkit-text-stroke:0.41px;left:2000.3px;"><b>job</b>=&quot;cAdvisor&quot;, </span>
<span class="t" id="t69" style="letter-spacing:1.116px;top:1757.68px;font-size:24px;line-height:24px;color:#212529;font-family:'Liberation Sans', 'Noto Sans CJK SC', sans-serif;-webkit-text-stroke:0.41px;left:2186px;"><b>name</b>=&quot;cadvisor&quot;}</span>
<span class="t" id="t70" style="letter-spacing:0.746px;top:1804.53px;font-size:25.6px;line-height:25.6px;color:#6c757d;font-family:'Liberation Sans', 'Noto Sans CJK SC', sans-serif;-webkit-text-stroke:0.44px;left:180.5px;">Click: select series, CMD + click: toggle multiple series</span>
</section>
<section class="panel-footer">
<span class="t" id="t71" style="letter-spacing:-0.305px;top:1925.80px;font-size:28px;line-height:28px;color:#2f7cf6;font-family:'Liberation Sans', 'Noto Sans CJK SC', sans-serif;-webkit-text-stroke:0.48px;left:3355px;">Remove Panel</span>
<div style="left:30px;top:2010px;width:198px;height:40px;background:#2f7cf6;border-radius:8px;"></div>
<div style="left:110px;top:2038px;width:3364px;height:80px;background:#000;box-shadow:0 0 70px 0 rgba(0,0,0,0.3);"></div>
</section>
</div></body></html>
